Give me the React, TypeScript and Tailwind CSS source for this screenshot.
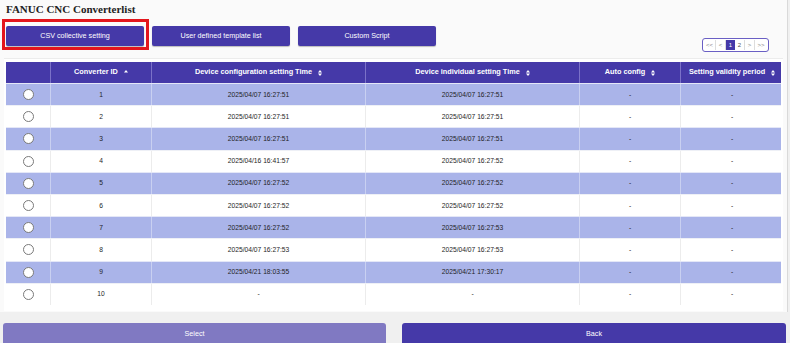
import React from "react";

const rows = [
  { id: "1", conf: "2025/04/07 16:27:51", ind: "2025/04/07 16:27:51" },
  { id: "2", conf: "2025/04/07 16:27:51", ind: "2025/04/07 16:27:51" },
  { id: "3", conf: "2025/04/07 16:27:51", ind: "2025/04/07 16:27:51" },
  { id: "4", conf: "2025/04/16 16:41:57", ind: "2025/04/07 16:27:52" },
  { id: "5", conf: "2025/04/07 16:27:52", ind: "2025/04/07 16:27:52" },
  { id: "6", conf: "2025/04/07 16:27:52", ind: "2025/04/07 16:27:52" },
  { id: "7", conf: "2025/04/07 16:27:52", ind: "2025/04/07 16:27:53" },
  { id: "8", conf: "2025/04/07 16:27:53", ind: "2025/04/07 16:27:53" },
  { id: "9", conf: "2025/04/21 18:03:55", ind: "2025/04/21 17:30:17" },
  { id: "10", conf: "-", ind: "-" },
];

const cols = "grid grid-cols-[45px_101px_214px_214px_101px_102px]";

function SortBoth() {
  return (
    <svg width="4" height="6" viewBox="0 0 4 6" className="ml-[6px] inline-block">
      <path d="M2 0 L4 2.4 L0 2.4 Z" fill="white" />
      <path d="M2 6 L4 3.6 L0 3.6 Z" fill="white" />
    </svg>
  );
}

function SortUp() {
  return (
    <svg width="4" height="6" viewBox="0 0 4 6" className="ml-[6px] inline-block">
      <path d="M2 0 L4 2.6 L0 2.6 Z" fill="white" />
    </svg>
  );
}

function Header({ children, sort, last }: { children: React.ReactNode; sort?: "up" | "both"; last?: boolean }) {
  return (
    <div
      className={`flex items-center justify-center text-[7.3px] font-bold text-white ${last ? "" : "border-r border-[#7b71c8]"}`}
    >
      <span>{children}</span>
      {sort === "up" ? <SortUp /> : sort === "both" ? <SortBoth /> : null}
    </div>
  );
}

function Cell({ children, odd, last }: { children: React.ReactNode; odd: boolean; last?: boolean }) {
  return (
    <div
      className={`flex items-center justify-center text-[6.7px] text-[#1e1e1e] ${
        last ? "" : odd ? "border-r border-[#c9d0f1]" : "border-r border-[#ececec]"
      }`}
    >
      {children}
    </div>
  );
}

export default function App() {
  return (
    <div
      className="w-[790px] h-[343px] overflow-hidden bg-[#f0f0f0] relative"
      style={{ fontFamily: '"Liberation Sans", Arial, sans-serif' }}
    >
      <div className="w-[788px] h-[312px] bg-[#fafafa] border-r border-[#d9d9d9]">
        <div
          className="pl-[6px] pt-[3px] h-[18px] text-[11px] leading-[12px] font-bold text-[#222]"
          style={{ fontFamily: '"Liberation Serif", "Times New Roman", serif' }}
        >
          FANUC CNC Converterlist
        </div>
        <div className="mt-[8px] h-[26px] flex justify-between pl-[6px] pr-[18px]">
          <div className="flex gap-[8px] items-start">
            <button className="w-[138px] h-[20px] bg-[#4539a8] text-white text-[7.2px] rounded-[2px] shadow-[0_1px_1px_rgba(0,0,0,0.25)]">
              CSV collective setting
            </button>
            <button className="w-[138px] h-[20px] bg-[#4539a8] text-white text-[7.2px] rounded-[2px] shadow-[0_1px_1px_rgba(0,0,0,0.25)]">
              User defined template list
            </button>
            <button className="w-[138px] h-[20px] bg-[#4539a8] text-white text-[7.2px] rounded-[2px] shadow-[0_1px_1px_rgba(0,0,0,0.25)]">
              Custom Script
            </button>
          </div>
          <div className="self-end flex h-[14px] border-[1.5px] border-[#6a5fc4] rounded-[3px] bg-white px-[1px] py-[1px] text-[6px] text-[#888]">
            <div className="w-[12px] flex items-center justify-center border-r border-[#ddd]">&lt;&lt;</div>
            <div className="w-[10px] flex items-center justify-center border-r border-[#ddd]">&lt;</div>
            <div className="w-[9px] flex items-center justify-center bg-[#4539a8] text-white">1</div>
            <div className="w-[10px] flex items-center justify-center border-r border-[#ddd] text-[#555]">2</div>
            <div className="w-[10px] flex items-center justify-center border-r border-[#ddd]">&gt;</div>
            <div className="w-[12px] flex items-center justify-center">&gt;&gt;</div>
          </div>
        </div>
        <div className="mt-[6px] mx-[4px] h-[253px] bg-white border-t border-[#ececec] pt-[3px] px-[2px]">
          <div className={`${cols} h-[21px] bg-[#4539a8]`}>
            <Header>{""}</Header>
            <Header sort="up">Converter ID</Header>
            <Header sort="both">Device configuration setting Time</Header>
            <Header sort="both">Device individual setting Time</Header>
            <Header sort="both">Auto config</Header>
            <Header sort="both" last>
              Setting validity period
            </Header>
          </div>
          {rows.map((r, i) => {
            const odd = i % 2 === 0;
            return (
              <div
                key={r.id}
                className={`${cols} h-[22.2px] border-t ${odd ? "bg-[#aab4e9] border-[#e4e7f7]" : "bg-white border-[#eef0f6]"}`}
              >
                <Cell odd={odd}>
                  <span className="block w-[11px] h-[11px] rounded-full border border-[#7a7a7a] bg-white" />
                </Cell>
                <Cell odd={odd}>{r.id}</Cell>
                <Cell odd={odd}>{r.conf}</Cell>
                <Cell odd={odd}>{r.ind}</Cell>
                <Cell odd={odd}>-</Cell>
                <Cell odd={odd} last>
                  -
                </Cell>
              </div>
            );
          })}
        </div>
      </div>
      <div className="mt-[11px] flex">
        <button className="ml-[3px] w-[383px] h-[22px] bg-[#8079c2] text-white text-[7.2px] rounded-t-[3px]">
          Select
        </button>
        <button className="ml-[16px] w-[384px] h-[22px] bg-[#4539a8] text-white text-[7.2px] rounded-t-[3px]">
          Back
        </button>
      </div>
      <div className="absolute left-[2px] top-[19px] w-[147px] h-[31px] border-[3px] border-[#e3161d]" />
    </div>
  );
}
